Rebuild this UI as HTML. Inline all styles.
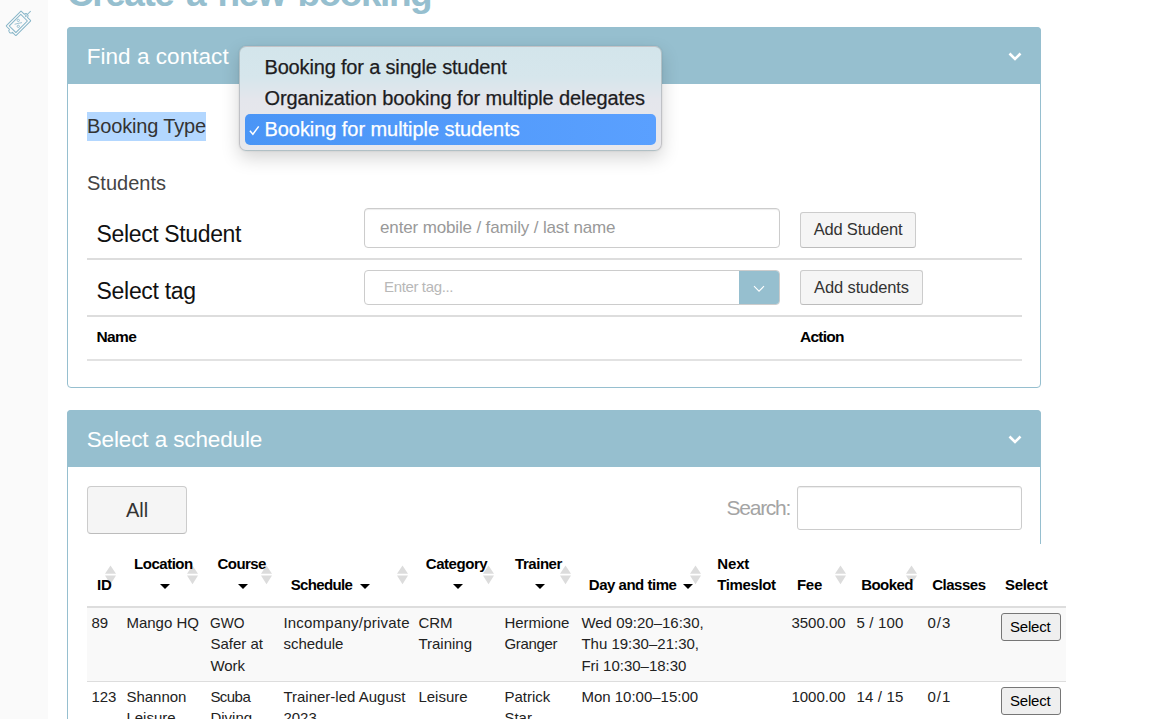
<!DOCTYPE html>
<html lang="en">
<head>
<meta charset="utf-8">
<title>Create a new booking</title>
<style>
*{box-sizing:border-box;margin:0;padding:0}
html,body{width:1170px;height:719px;overflow:hidden;background:#fff}
body{position:relative;font-family:"Liberation Sans",Arial,sans-serif;color:#333;font-size:15px}
.abs{position:absolute;white-space:nowrap}
#side{position:absolute;left:0;top:0;width:48px;height:719px;background:#fafafa}
#title{left:67px;top:-29px;font-size:37px;line-height:46px;font-weight:bold;color:#96bfcf;letter-spacing:-1.45px;word-spacing:3.6px}
.panel{position:absolute;left:67px;width:974px;border:1px solid #96bfcf;border-radius:4px;background:#fff}
.phead{position:absolute;left:-1px;top:-1px;width:974px;height:57px;background:#96bfcf;border-radius:4px 4px 0 0}
.phead span{position:absolute;left:19.7px;top:15px;font-size:22.5px;letter-spacing:.05px;line-height:30px;color:#fff;white-space:nowrap}
.chev{position:absolute;left:941px;top:25px;width:14px;height:9px}
#p1{top:27px;height:361px}
#p2{top:410px;height:400px}
.sep{position:absolute;left:87px;width:935px;height:2px;background:#ddd}
.btn{position:absolute;background:#f5f5f5;border:1px solid #ccc;border-bottom-color:#bcbcbc;border-radius:3px;color:#333;text-align:center;white-space:nowrap}
.inp{position:absolute;background:#fff;border:1px solid #ccc;border-radius:4px;box-shadow:inset 0 1px 1px rgba(0,0,0,.075)}
/* dropdown */
#dd{position:absolute;left:239px;top:46px;width:423px;height:105px;border-radius:7px;border:1px solid rgba(0,0,0,.16);
 background:linear-gradient(180deg,#d3e5eb 0px,#d6e6ec 30px,#e4e6ec 52px,#e9e8ec 104px);box-shadow:0 7px 18px rgba(0,0,0,.17),0 0 2px rgba(0,0,0,.12)}
#dd .it{-webkit-text-stroke:.25px currentColor;position:absolute;left:24.5px;letter-spacing:-.1px;font-size:20px;line-height:31px;color:#1d1d1f;white-space:nowrap}
#dd .hl{position:absolute;left:5px;top:67px;width:411px;height:31px;border-radius:5px;background:linear-gradient(90deg,#4a95f6,#5aa0ff)}
/* table */
#tblbg{position:absolute;left:87px;top:544px;width:1083px;height:175px;background:#fff}
#thead .h{position:absolute;font-weight:bold;font-size:15px;line-height:21px;color:#000;white-space:nowrap;text-align:center}
.caret{display:inline-block;width:0;height:0;border-left:4.8px solid transparent;border-right:4.8px solid transparent;border-top:4.8px solid #000;vertical-align:middle;position:relative;top:0px}
.car{position:absolute;top:584px;width:10px;height:5px;fill:#000}
.sort{position:absolute;top:565.1px;width:11px;height:20px;fill:#dcdcdc}
table{position:absolute;left:87px;top:608px;width:979px;border-collapse:collapse;table-layout:fixed}
td{vertical-align:top;padding:4px 4px 4px 4.4px;font-size:15px;line-height:21.43px;color:#222;border-bottom:1px solid #ddd;overflow:visible}
tr.odd td{background:#f9f9f9}
.sel{display:block;margin:1px 0 0 .6px;letter-spacing:-.2px;padding-right:1.4px;width:60px;height:28px;border:1px solid #767676;border-radius:3px;background:#efefef;color:#000;font-size:15px;line-height:26px;text-align:center}
</style>
</head>
<body>
<div id="side">
<svg class="abs" style="left:0;top:0" width="48" height="48" viewBox="0 0 48 48" fill="none" stroke="#86b5c8" stroke-width="0.95" stroke-linejoin="round">
 <g transform="translate(18.45 23.35) rotate(-45)">
  <path d="M-10.1 -6.95H10.1a.5.5 0 0 1 .5.5V-2.1a2.1 2.1 0 0 1 0 4.2V6.45a.5.5 0 0 1 -.5.5H-10.1a.5.5 0 0 1 -.5-.5V2.1a2.1 2.1 0 0 1 0-4.2V-6.45a.5.5 0 0 1 .5-.5z"/>
  <rect x="-8.3" y="-4.7" width="16.3" height="9.4"/>
  <circle cx="10.4" cy="0" r="0.75" fill="#86b5c8" stroke-width="0.5"/>
  <path d="M12.9 0H17.3"/>
 </g>
 <circle cx="18.3" cy="20.4" r="1.15" stroke-width="0.8"/><circle cx="18.3" cy="26.3" r="1.15" stroke-width="0.8"/>
 <path d="M14.6 24.3c2.2-.2 4.6-1.6 7.4-1.7" stroke-width="0.8"/>
</svg>
</div>

<div id="title" class="abs">Create a new booking</div>

<div class="panel" id="p1">
 <div class="phead"><span>Find a contact</span>
  <svg class="chev" viewBox="0 0 14 9"><path d="M1.5 1.5L7 7l5.5-5.5" fill="none" stroke="#fff" stroke-width="2.6"/></svg>
 </div>
</div>

<div class="abs" style="left:87px;top:112px;height:29px;line-height:29px;font-size:20px;background:#b3d7ff;color:#333;letter-spacing:-.15px">Booking Type</div>
<div class="abs" style="left:87px;top:169px;line-height:29px;font-size:20px;color:#444">Students</div>

<div class="abs" style="left:96.6px;top:217px;font-size:23px;line-height:34px;color:#111;letter-spacing:-.37px">Select Student</div>
<div class="inp" style="left:364px;top:208px;width:416px;height:40px"><span class="abs" style="left:15px;top:8px;font-size:17px;line-height:22px;color:#999;letter-spacing:-.14px">enter mobile / family / last name</span></div>
<div class="btn" style="left:800px;top:212px;width:116px;height:36px;font-size:16.5px;line-height:32px;letter-spacing:-.2px">Add Student</div>
<div class="sep" style="top:258px"></div>

<div class="abs" style="left:96.6px;top:273.6px;font-size:23px;line-height:34px;color:#111;letter-spacing:-.32px">Select tag</div>
<div class="inp" style="left:364px;top:270px;width:416px;height:35px;box-shadow:none">
 <span class="abs" style="left:19px;top:6px;font-size:15px;line-height:20px;color:#b8b8b8;letter-spacing:-.36px">Enter tag...</span>
 <div style="position:absolute;right:0;top:0;width:40px;height:33px;background:#96bfcf;border-radius:0 3px 3px 0">
  <svg style="position:absolute;left:14px;top:13.6px" width="12" height="8" viewBox="0 0 12 8"><path d="M1 1.2l5 5L11 1.2" fill="none" stroke="#fff" stroke-width="1.1"/></svg>
 </div>
</div>
<div class="btn" style="left:800px;top:270px;width:123px;height:35px;font-size:16.5px;line-height:33px;letter-spacing:-.12px">Add students</div>
<div class="sep" style="top:315px"></div>

<div class="abs" style="left:96.4px;top:326px;font-size:15.5px;line-height:22px;font-weight:bold;color:#000;letter-spacing:-.6px">Name</div>
<div class="abs" style="left:800px;top:326px;font-size:15.5px;line-height:22px;font-weight:bold;color:#000;letter-spacing:-.77px">Action</div>
<div class="sep" style="top:359px;height:2px;background:#e2e2e2"></div>

<div class="panel" id="p2">
 <div class="phead"><span style="letter-spacing:-.12px">Select a schedule</span>
  <svg class="chev" viewBox="0 0 14 9"><path d="M1.5 1.5L7 7l5.5-5.5" fill="none" stroke="#fff" stroke-width="2.6"/></svg>
 </div>
</div>
<div class="btn" style="left:87px;top:486px;width:100px;height:48px;font-size:20px;line-height:46px;border-radius:4px">All</div>
<div class="abs" style="left:726.6px;top:494px;font-size:21px;line-height:28px;color:#a4a4a4;letter-spacing:-1.27px">Search:</div>
<div class="inp" style="left:797px;top:486px;width:225px;height:44px;border-radius:3px"></div>

<div id="tblbg"></div>
<div id="thead">
 <svg class="sort" style="left:104.5px" viewBox="0 0 11 20"><path d="M5.5 .4L11 8.8H0z"/><path d="M5.5 19.3L11 10.6H0z"/></svg>
 <svg class="sort" style="left:187.4px" viewBox="0 0 11 20"><path d="M5.5 .4L11 8.8H0z"/><path d="M5.5 19.3L11 10.6H0z"/></svg>
 <svg class="sort" style="left:260.9px" viewBox="0 0 11 20"><path d="M5.5 .4L11 8.8H0z"/><path d="M5.5 19.3L11 10.6H0z"/></svg>
 <svg class="sort" style="left:397.4px" viewBox="0 0 11 20"><path d="M5.5 .4L11 8.8H0z"/><path d="M5.5 19.3L11 10.6H0z"/></svg>
 <svg class="sort" style="left:482.6px" viewBox="0 0 11 20"><path d="M5.5 .4L11 8.8H0z"/><path d="M5.5 19.3L11 10.6H0z"/></svg>
 <svg class="sort" style="left:559.6px" viewBox="0 0 11 20"><path d="M5.5 .4L11 8.8H0z"/><path d="M5.5 19.3L11 10.6H0z"/></svg>
 <svg class="sort" style="left:689.5px" viewBox="0 0 11 20"><path d="M5.5 .4L11 8.8H0z"/><path d="M5.5 19.3L11 10.6H0z"/></svg>
 <svg class="sort" style="left:834.7px" viewBox="0 0 11 20"><path d="M5.5 .4L11 8.8H0z"/><path d="M5.5 19.3L11 10.6H0z"/></svg>
 <svg class="sort" style="left:905.5px" viewBox="0 0 11 20"><path d="M5.5 .4L11 8.8H0z"/><path d="M5.5 19.3L11 10.6H0z"/></svg>
 <div class="h" style="left:97px;top:574px;letter-spacing:-.25px">ID</div>
 <div class="h" style="left:134px;top:553px;letter-spacing:-.47px">Location</div>
 <div class="h" style="left:217.6px;top:553px;letter-spacing:-.58px">Course</div>
 <div class="h" style="left:290.8px;top:574px;letter-spacing:-.68px">Schedule</div>
 <div class="h" style="left:425.8px;top:553px;letter-spacing:-.45px">Category</div>
 <div class="h" style="left:515px;top:553px;letter-spacing:-.45px">Trainer</div>
 <div class="h" style="left:588.8px;top:574px;letter-spacing:-.48px">Day and time</div>
 <div class="h" style="left:717.3px;top:553px;letter-spacing:-.15px">Next</div>
 <div class="h" style="left:717.3px;top:574px;letter-spacing:-.37px">Timeslot</div>
 <div class="h" style="left:797px;top:574px;letter-spacing:-.3px">Fee</div>
 <div class="h" style="left:861.3px;top:574px;letter-spacing:-.6px">Booked</div>
 <div class="h" style="left:932.2px;top:574px;letter-spacing:-.47px">Classes</div>
 <div class="h" style="left:1005px;top:574px;letter-spacing:-.3px">Select</div>
 <svg class="car" style="left:160.3px" viewBox="0 0 10 5"><path d="M0 0H10L5 5z"/></svg>
 <svg class="car" style="left:237.9px" viewBox="0 0 10 5"><path d="M0 0H10L5 5z"/></svg>
 <svg class="car" style="left:360.2px" viewBox="0 0 10 5"><path d="M0 0H10L5 5z"/></svg>
 <svg class="car" style="left:453.0px" viewBox="0 0 10 5"><path d="M0 0H10L5 5z"/></svg>
 <svg class="car" style="left:535.1px" viewBox="0 0 10 5"><path d="M0 0H10L5 5z"/></svg>
 <svg class="car" style="left:683.3px" viewBox="0 0 10 5"><path d="M0 0H10L5 5z"/></svg>
</div>
<div class="abs" style="left:87px;top:606px;width:979px;height:2px;background:#ddd"></div>

<table>
<colgroup><col style="width:35px"><col style="width:84px"><col style="width:73px"><col style="width:135px"><col style="width:86px"><col style="width:77px"><col style="width:210px"><col style="width:65px"><col style="width:71px"><col style="width:73px"><col style="width:70px"></colgroup>
<tr class="odd" style="height:73px"><td>89</td><td>Mango HQ</td><td><span style="display:inline-block;transform:scaleX(.92);transform-origin:0 50%">GWO</span><br>Safer at Work</td><td><span style="letter-spacing:.22px">Incompany/private</span> schedule</td><td>CRM Training</td><td>Hermione <span style="letter-spacing:-.33px">Granger</span></td><td>Wed 09:20–16:30,<br>Thu 19:30–21:30,<br>Fri 10:30–18:30</td><td>3500.00</td><td style="letter-spacing:.2px">5 / 100</td><td style="letter-spacing:1px">0/3</td><td><span class="sel">Select</span></td></tr>
<tr><td>123</td><td>Shannon Leisure</td><td><span style="letter-spacing:-.55px">Scuba</span> Diving</td><td>Trainer-led August 2023</td><td>Leisure</td><td>Patrick Star</td><td>Mon 10:00–15:00</td><td>1000.00</td><td style="letter-spacing:.2px">14 / 15</td><td style="letter-spacing:1px">0/1</td><td><span class="sel">Select</span></td></tr>
</table>

<div id="dd">
 <div class="hl"></div>
 <div class="it" style="top:5px;letter-spacing:-.17px">Booking for a single student</div>
 <div class="it" style="top:36px">Organization booking for multiple delegates</div>
 <div class="it" style="top:67px;color:#fff;letter-spacing:-.06px">Booking for multiple students</div>
 <svg style="position:absolute;left:9px;top:78px" width="11" height="11" viewBox="0 0 11 11"><path d="M.9 5.7l3 3.5L9.7 1.4" fill="none" stroke="#fff" stroke-width="1.5"/></svg>
</div>
</body>
</html>
